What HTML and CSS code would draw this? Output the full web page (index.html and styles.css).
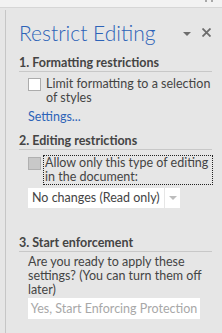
FILE: index.html
```html
<!DOCTYPE html>
<html lang="en">

<head>
    <meta charset="UTF-8">
    <meta name="viewport" content="width=device-width, initial-scale=1.0">
    <title>Restrict Editing</title>
    <link rel="stylesheet" href="styles.css">
</head>

<body>

    <div class="topbar">
        <span class="grip"></span>
    </div>

    <div class="pane">
        <div class="title-row">
            <h1 class="title">Restrict Editing</h1>
            <div class="title-tools">
                <span class="menu-arrow"></span>
                <svg class="close" width="9" height="9" viewBox="0 0 9 9">
                    <path d="M0.5 0.5 L8.5 8.5 M8.5 0.5 L0.5 8.5" stroke="#6d6d6d" stroke-width="1.8" />
                </svg>
            </div>
        </div>

        <!-- 1 -->
        <div class="section">
            <h2 class="section-head">1. Formatting restrictions</h2>
            <div class="check-row">
                <span class="box"></span>
                <span class="check-label">Limit formatting to a selection of styles</span>
            </div>
            <a class="link" href="#">Settings...</a>
        </div>

        <!-- 2 -->
        <div class="section">
            <h2 class="section-head">2. Editing restrictions</h2>
            <div class="check-row">
                <span class="box disabled"></span>
                <span class="check-label focus">Allow only this type of editing in the document:</span>
            </div>
            <div class="select">
                <span class="select-value">No changes (Read only)</span>
                <span class="select-btn"><span class="small-arrow"></span></span>
            </div>
        </div>

        <!-- 3 -->
        <div class="section last">
            <h2 class="section-head">3. Start enforcement</h2>
            <p class="text">Are you ready to apply these settings? (You can turn them off later)</p>
            <div class="button">Yes, Start Enforcing Protection</div>
        </div>
    </div>

</body>

</html>
```

FILE: styles.css
```css
html,
body {
    margin: 0;
    padding: 0;
    background: #e6e6e6;
    font-family: "Lato", "Open Sans", sans-serif;
    font-size: 12.5px;
    color: #444;
    height: 100%;
    overflow: hidden;
}

.topbar {
    height: 7px;
    background: #f2f2f2;
    border-bottom: 1px solid #d6d6d6;
    position: relative;
}

.grip {
    position: absolute;
    right: 9px;
    top: 0;
    width: 8px;
    height: 2px;
    border-left: 2px solid #a8a8a8;
    border-right: 2px solid #a8a8a8;
    box-sizing: border-box;
}

.pane {
    margin: 2px 0 0 5px;
    border-left: 1px solid #c6c6c6;
    height: 100%;
    padding: 0 10px 0 13px;
}

.title-row {
    display: flex;
    align-items: center;
    justify-content: space-between;
    height: 45px;
}

.title {
    margin: 0;
    font-family: "Lato", sans-serif;
    font-weight: 300;
    font-size: 21px;
    color: #2d63b8;
}

.title-tools {
    display: flex;
    align-items: center;
    gap: 11px;
    padding-right: 1px;
}

.menu-arrow {
    width: 0;
    height: 0;
    border-left: 4px solid transparent;
    border-right: 4px solid transparent;
    border-top: 4px solid #6d6d6d;
    margin-top: 2px;
}

.section-head {
    margin: 0 0 5px;
    font-size: 12.5px;
    font-weight: 700;
    color: #444;
    border-bottom: 1px solid #c8c8c8;
    line-height: 16px;
}

.check-row {
    display: flex;
    align-items: flex-start;
    padding-left: 9px;
}

.box {
    flex: none;
    width: 11px;
    height: 11px;
    border: 1px solid #acacac;
    background: #fff;
    margin-right: 4px;
    margin-top: 1px;
}

.box.disabled {
    background: #c8c8c8;
    border-color: #b0b0b0;
    margin-top: 2px;
    margin-right: 2px;
}

.check-label {
    line-height: 14px;
    padding-left: 1px;
}

.check-label.focus {
    border: 1px dotted #222;
    flex: 1;
    margin-right: -1px;
}

.link {
    display: block;
    color: #2d63b8;
    text-decoration: none;
    margin: 5px 0 9px 9px;
    line-height: 14px;
}

.select {
    display: flex;
    margin: 3px 0 0 9px;
    width: 152px;
    height: 20px;
}

.select-value {
    flex: 1;
    background: #fff;
    line-height: 20px;
    padding-left: 4px;
    margin-right: 1px;
    white-space: nowrap;
}

.select-btn {
    width: 15px;
    background: #fff;
    display: flex;
    align-items: center;
    justify-content: center;
}

.small-arrow {
    width: 0;
    height: 0;
    border-left: 4px solid transparent;
    border-right: 4px solid transparent;
    border-top: 4px solid #bdbdbd;
}

.section.last {
    margin-top: 27px;
}

.section.last .section-head {
    margin-bottom: 3px;
}

.text {
    margin: 0 0 0 9px;
    line-height: 14px;
}

.button {
    margin: 1px 0 0 9px;
    width: 172px;
    height: 21px;
    line-height: 21px;
    background: #fff;
    color: #a8a8a8;
    text-align: center;
    white-space: nowrap;
}
```
